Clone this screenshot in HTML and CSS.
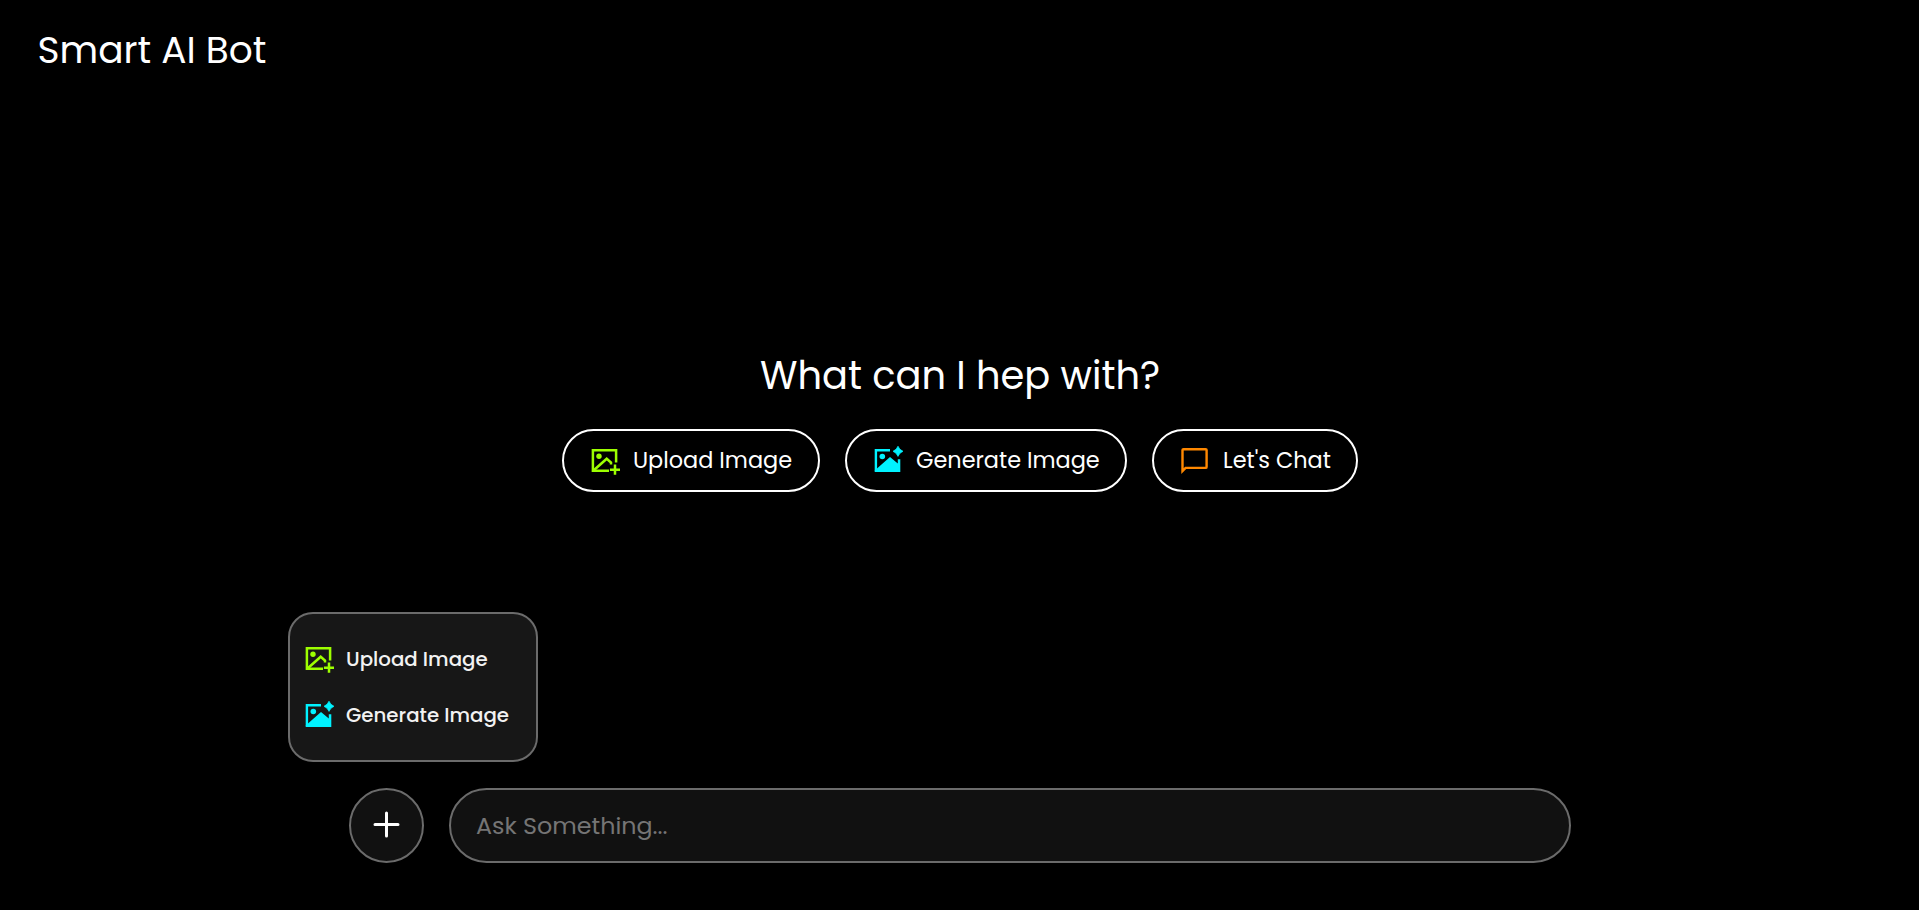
FILE: index.html
```html
<!DOCTYPE html>
<html lang="en">
<head>
<meta charset="utf-8">
<title>Smart AI Bot</title>
<link rel="stylesheet" href="styles.css">
</head>
<body>
<svg width="0" height="0" class="sprite" aria-hidden="true">
  <symbol id="upload" viewBox="0 0 31 31">
    <path d="M27.1 17.5V5.2H3.9v20.6H20" fill="none" stroke="currentColor" stroke-width="2.5"/>
    <circle cx="10" cy="11.3" r="2.7" fill="currentColor"/>
    <path d="M4.5 25.5 17.7 13.7 22 17.6V19.5" fill="none" stroke="currentColor" stroke-width="2.5"/>
    <path d="M26 19.5v10.3M20.9 24.7h10.1" fill="none" stroke="currentColor" stroke-width="2.5"/>
  </symbol>
  <symbol id="generate" viewBox="0 0 31 31">
    <path d="M18 5.2H3.9V26" fill="none" stroke="currentColor" stroke-width="2.4"/>
    <path d="M2.7 27v-1.5L18 12l7.8 6.4v-4.2h2.5V27z" fill="currentColor"/>
    <circle cx="10.3" cy="11.5" r="2.8" fill="currentColor"/>
    <path d="M26 1.2Q27.4 4.9 31 6.3 27.4 7.7 26 11.4 24.6 7.7 21 6.3 24.6 4.9 26 1.2z" fill="currentColor" stroke="currentColor" stroke-width=".7"/>
  </symbol>
  <symbol id="chat" viewBox="0 0 31 31">
    <path d="M3.5 26V5Q3.5 4.2 4.5 4.2H26.6Q27.6 4.2 27.6 5V21.9Q27.6 22.9 26.6 22.9H6.6z" fill="none" stroke="currentColor" stroke-width="2.4"/>
  </symbol>
</svg>
<header class="brand"><span class="brand-text">Smart AI Bot</span></header>
<main class="welcome">
  <h1 class="question">What can I hep with?</h1>
  <div class="actions">
    <button class="pill pill-upload"><svg class="icon green"><use href="#upload"/></svg><span>Upload Image</span></button>
    <button class="pill pill-generate"><svg class="icon cyan"><use href="#generate"/></svg><span>Generate Image</span></button>
    <button class="pill pill-chat"><svg class="icon orange"><use href="#chat"/></svg><span>Let's Chat</span></button>
  </div>
</main>
<footer class="composer">
  <div class="menu">
    <div class="menu-item"><svg class="icon green"><use href="#upload"/></svg><span>Upload Image</span></div>
    <div class="menu-item"><svg class="icon cyan"><use href="#generate"/></svg><span>Generate Image</span></div>
  </div>
  <button class="add" aria-label="Add"><svg class="plus" viewBox="0 0 27 27"><path d="M13.5 2v23M2 13.5h23" fill="none" stroke="currentColor" stroke-width="3" stroke-linecap="round"/></svg></button>
  <input class="prompt" type="text" placeholder="Ask Something...">
</footer>
</body>
</html>
```
FILE: styles.css
```css
* { box-sizing: border-box; margin: 0; padding: 0; }
body {
  height: 910px;
  background: #000;
  color: #fff;
  font-family: Poppins, Inter, "Open Sans", sans-serif;
  display: flex;
  flex-direction: column;
  overflow: hidden;
}
.sprite { position: absolute; }
.brand { height: 100px; padding: 0 37.5px; display: flex; align-items: center; font-size: 37.5px; }
.brand-text { white-space: nowrap; }
.welcome { flex: 1; padding-top: 246px; display: flex; flex-direction: column; align-items: center; }
.question { height: 60px; line-height: 60px; padding-left: 1px; font-size: 38.4px; font-weight: 400; white-space: nowrap; }
.actions { display: flex; gap: 25px; margin-top: 23px; padding-left: 1px; }
.pill {
  height: 63px; padding: 0 25px; border: 2px solid #fff; border-radius: 40px;
  background: #000; color: #fff; font: inherit; font-size: 22.4px; white-space: nowrap;
  display: flex; align-items: center; gap: 13px;
}
.pill span { padding-bottom: 2px; }
.pill-upload { width: 258px; }
.pill-generate { width: 282px; }
.pill-chat { width: 206px; }
.icon { width: 31px; height: 31px; flex: none; }
.green { color: #9dff00; }
.cyan { color: #00f2ff; }
.orange { color: #ff8800; }
.composer {
  position: relative; height: 122px; padding: 0 348px 0 349px;
  display: flex; align-items: flex-start; gap: 25px;
}
.menu {
  position: absolute; left: 288px; bottom: 148px; width: 250px; height: 150px;
  padding: 17px 13px; border: 2px solid #6b6b6b; border-radius: 25px; background: #171717;
  color: #f2f2f2; font-size: 19.8px; font-weight: 500; white-space: nowrap;
}
.menu-item { height: 56px; display: flex; align-items: center; gap: 12px; }
.menu-item .green { margin-bottom: 1px; }
.menu-item .cyan { margin-top: 1px; }
.add {
  width: 75px; height: 75px; flex: none; border: 2px solid #6b6b6b; border-radius: 50%;
  background: #111; color: #fff; display: flex; align-items: center; justify-content: center;
}
.plus { width: 27px; height: 27px; margin-bottom: 2px; }
.prompt {
  flex: 1; height: 75px; min-width: 0; padding: 0 25px; border: 2px solid #6b6b6b;
  border-radius: 38px; background: #111; color: #fff; font: inherit; font-size: 23.8px; outline: none;
}
.prompt::placeholder { color: #757575; }
```
